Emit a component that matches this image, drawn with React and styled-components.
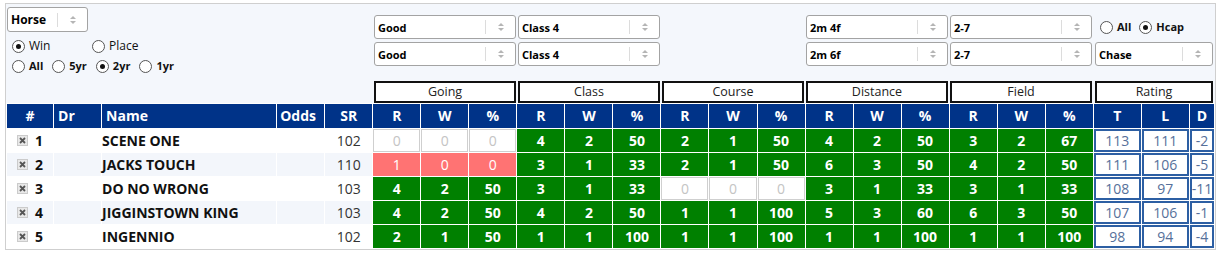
import React from "react";
import styled, { createGlobalStyle } from "styled-components";

const GlobalStyle = createGlobalStyle`
  body {
    margin: 0;
    background: #fff;
    font-family: "Open Sans", "Liberation Sans", sans-serif;
  }
`;

const runners = [
  { no: 1, name: "SCENE ONE", sr: 102, stats: [[0, 0, 0], [4, 2, 50], [2, 1, 50], [4, 2, 50], [3, 2, 67]], rating: [113, 111, -2] },
  { no: 2, name: "JACKS TOUCH", sr: 110, stats: [[1, 0, 0], [3, 1, 33], [2, 1, 50], [6, 3, 50], [4, 2, 50]], rating: [111, 106, -5] },
  { no: 3, name: "DO NO WRONG", sr: 103, stats: [[4, 2, 50], [3, 1, 33], [0, 0, 0], [3, 1, 33], [3, 1, 33]], rating: [108, 97, -11] },
  { no: 4, name: "JIGGINSTOWN KING", sr: 103, stats: [[4, 2, 50], [4, 2, 50], [1, 1, 100], [5, 3, 60], [6, 3, 50]], rating: [107, 106, -1] },
  { no: 5, name: "INGENNIO", sr: 102, stats: [[2, 1, 50], [1, 1, 100], [1, 1, 100], [1, 1, 100], [1, 1, 100]], rating: [98, 94, -4] },
];

const groups = ["Going", "Class", "Course", "Distance", "Field"];

const filters = [
  ["Good", "Good"],
  ["Class 4", "Class 4"],
  null,
  ["2m 4f", "2m 6f"],
  ["2-7", "2-7"],
];

const toneOf = ([runs, wins]) => (runs === 0 ? "empty" : wins === 0 ? "bad" : "good");

const Arrows = () => (
  <svg width="8" height="10" viewBox="0 0 8 10">
    <path d="M4 1 L7 4 H1 Z" fill="#b5b5b5" />
    <path d="M4 9 L7 6 H1 Z" fill="#b5b5b5" />
  </svg>
);

const Select = ({ value, w, h = 24, size = 11 }) => (
  <SelectBox $w={w} $h={h} $size={size}>
    <SelectText>{value}</SelectText>
    <SelectArrow>
      <Arrows />
    </SelectArrow>
  </SelectBox>
);

const Radio = ({ label, on, bold, w }) => (
  <RadioItem $bold={bold} $w={w}>
    <RadioDot $on={on} />
    {label}
  </RadioItem>
);

const App = () => {
  return (
    <>
      <GlobalStyle />
      <Wrapper>
        <TopPanel>
          <LeftControls>
            <Select value="Horse" w={81} h={25} size={12} />
            <RadioRow $top={7}>
              <Radio label="Win" on w={80} />
              <Radio label="Place" />
            </RadioRow>
            <RadioRow $gap={9} $top={6}>
              <Radio label="All" bold />
              <Radio label="5yr" bold />
              <Radio label="2yr" bold on />
              <Radio label="1yr" bold />
            </RadioRow>
          </LeftControls>

          {filters.map((pair, i) => (
            <FilterColumn key={i}>
              {pair && pair.map((v, j) => <Select key={j} value={v} w={142} />)}
            </FilterColumn>
          ))}

          <RatingColumn>
            <HcapRow>
              <Radio label="All" bold />
              <Radio label="Hcap" bold on />
            </HcapRow>
            <Select value="Chase" w={118} />
          </RatingColumn>

          <span />
          {groups.map((g) => (
            <GroupBox key={g}>{g}</GroupBox>
          ))}
          <GroupBox $wide>Rating</GroupBox>
        </TopPanel>

        <Table>
          <colgroup>
            <col style={{ width: 46 }} />
            <col style={{ width: 47 }} />
            <col style={{ width: 174 }} />
            <col style={{ width: 47 }} />
            <col style={{ width: 47 }} />
            {Array.from({ length: 17 }).map((_, i) => (
              <col key={i} style={{ width: 47 }} />
            ))}
            <col style={{ width: 24 }} />
          </colgroup>
          <thead>
            <tr>
              <Th>#</Th>
              <Th $left>Dr</Th>
              <Th $left>Name</Th>
              <Th $left $indent={3}>Odds</Th>
              <Th>SR</Th>
              {groups.map((g) => (
                <React.Fragment key={g}>
                  <Th>R</Th>
                  <Th>W</Th>
                  <Th>%</Th>
                </React.Fragment>
              ))}
              <Th>T</Th>
              <Th>L</Th>
              <Th>D</Th>
            </tr>
          </thead>
          <tbody>
            {runners.map((r, idx) => (
              <tr key={r.no}>
                <InfoCell $alt={idx % 2 === 1}>
                  <NumberWrap>
                    <ScratchBox>
                      <svg width="7" height="7" viewBox="0 0 7 7">
                        <path d="M1 1 L6 6 M6 1 L1 6" stroke="#555" strokeWidth="1.8" />
                      </svg>
                    </ScratchBox>
                    {r.no}
                  </NumberWrap>
                </InfoCell>
                <InfoCell $alt={idx % 2 === 1} />
                <NameCell $alt={idx % 2 === 1}>{r.name}</NameCell>
                <InfoCell $alt={idx % 2 === 1} />
                <SrCell $alt={idx % 2 === 1}>{r.sr}</SrCell>
                {r.stats.map((s, gi) => {
                  const tone = toneOf(s);
                  return s.map((v, k) => (
                    <StatCell key={`${gi}-${k}`} $tone={tone}>
                      {v}
                    </StatCell>
                  ));
                })}
                {r.rating.map((v, k) => (
                  <RatingCell key={k}>{v}</RatingCell>
                ))}
              </tr>
            ))}
          </tbody>
        </Table>
      </Wrapper>
    </>
  );
};

const Wrapper = styled.div`
  margin: 3px 0 0 5px;
  width: 1211px;
  box-sizing: border-box;
  border: 1px solid #cfcfcf;
  background: #f4f7fc;
`;

const TopPanel = styled.div`
  display: grid;
  grid-template-columns: 367px repeat(5, 144px) 1fr;
  grid-template-rows: 77px 22px;
`;

const LeftControls = styled.div`
  padding: 3px 0 0 1px;
`;

const RadioRow = styled.div`
  display: flex;
  align-items: center;
  gap: ${(p) => p.$gap || 0}px;
  height: 14px;
  margin-top: ${(p) => p.$top || 6}px;
  padding-left: 5px;
`;

const RadioItem = styled.span`
  display: inline-flex;
  align-items: center;
  width: ${(p) => (p.$w ? `${p.$w}px` : "auto")};
  font-size: ${(p) => (p.$bold ? 11 : 12)}px;
  font-weight: ${(p) => (p.$bold ? 700 : 400)};
  color: #111;
  line-height: 14px;
`;

const RadioDot = styled.span`
  width: 13px;
  height: 13px;
  box-sizing: border-box;
  border-radius: 50%;
  border: 1px solid #555;
  background: #fff;
  margin-right: 4px;
  display: flex;
  align-items: center;
  justify-content: center;

  &::after {
    content: "";
    width: 5px;
    height: 5px;
    border-radius: 50%;
    background: ${(p) => (p.$on ? "#111" : "transparent")};
  }
`;

const FilterColumn = styled.div`
  display: flex;
  flex-direction: column;
  gap: 3px;
  padding: 11px 0 0 1px;
`;

const RatingColumn = styled.div`
  display: flex;
  flex-direction: column;
  gap: 3px;
  padding: 11px 0 0 2px;
`;

const HcapRow = styled.div`
  display: flex;
  align-items: center;
  gap: 8px;
  height: 24px;
  padding-left: 5px;
`;

const SelectBox = styled.div`
  display: flex;
  align-items: center;
  width: ${(p) => p.$w}px;
  height: ${(p) => p.$h}px;
  box-sizing: border-box;
  background: #fff;
  border: 1px solid #a3a3a3;
  border-radius: 3px;
  font-size: ${(p) => p.$size}px;
  font-weight: 700;
  color: #000;
`;

const SelectText = styled.span`
  flex: 1;
  padding-left: 3px;
  white-space: nowrap;
`;

const SelectArrow = styled.span`
  display: flex;
  align-items: center;
  justify-content: center;
  width: 29px;
  height: 14px;
  border-left: 1px solid #dcdcdc;
`;

const GroupBox = styled.div`
  margin-left: ${(p) => (p.$wide ? 2 : 1)}px;
  width: ${(p) => (p.$wide ? 118 : 142)}px;
  box-sizing: border-box;
  border: 2px solid #111;
  background: #fff;
  font-size: 12.5px;
  color: #222;
  text-align: center;
  line-height: 18px;
`;

const Table = styled.table`
  table-layout: fixed;
  width: 1209px;
  border-collapse: separate;
  border-spacing: 1px;
  background: #fff;
  font-size: 14px;
`;

const Th = styled.th`
  height: 24px;
  padding: 0;
  background: #003388;
  color: #fff;
  font-weight: 700;
  text-align: ${(p) => (p.$left ? "left" : "center")};
  text-indent: ${(p) => (p.$left ? p.$indent || 4 : 0)}px;
  line-height: 24px;
`;

const InfoCell = styled.td`
  height: 23px;
  padding: 0;
  background: ${(p) => (p.$alt ? "#f3f6fb" : "#fff")};
  line-height: 23px;
`;

const NameCell = styled(InfoCell)`
  font-weight: 700;
  color: #111;
  white-space: nowrap;
`;

const SrCell = styled(InfoCell)`
  text-align: center;
  color: #333;
`;

const NumberWrap = styled.div`
  display: flex;
  align-items: center;
  gap: 7px;
  padding-left: 10px;
  font-weight: 700;
  color: #111;
`;

const ScratchBox = styled.span`
  display: flex;
  align-items: center;
  justify-content: center;
  width: 11px;
  height: 11px;
  box-sizing: border-box;
  background: #e8e8e8;
  border: 1px solid #cbcbcb;
`;

const toneStyles = {
  good: "background: #008000; color: #fff; font-weight: 700;",
  bad: "background: #ff7373; color: #fff; font-weight: 400;",
  empty: "background: #fff; color: #c4c4c4; font-weight: 400; box-shadow: inset 0 0 0 1px #cfcfcf;",
};

const StatCell = styled.td`
  height: 23px;
  padding: 0;
  text-align: center;
  line-height: 23px;
  ${(p) => toneStyles[p.$tone]}
`;

const RatingCell = styled.td`
  height: 23px;
  padding: 0;
  text-align: center;
  line-height: 23px;
  background: #fff;
  color: #56709a;
  box-shadow: inset 0 0 0 2px #2d5fa3;
  white-space: nowrap;
  overflow: hidden;
`;

export default App;
